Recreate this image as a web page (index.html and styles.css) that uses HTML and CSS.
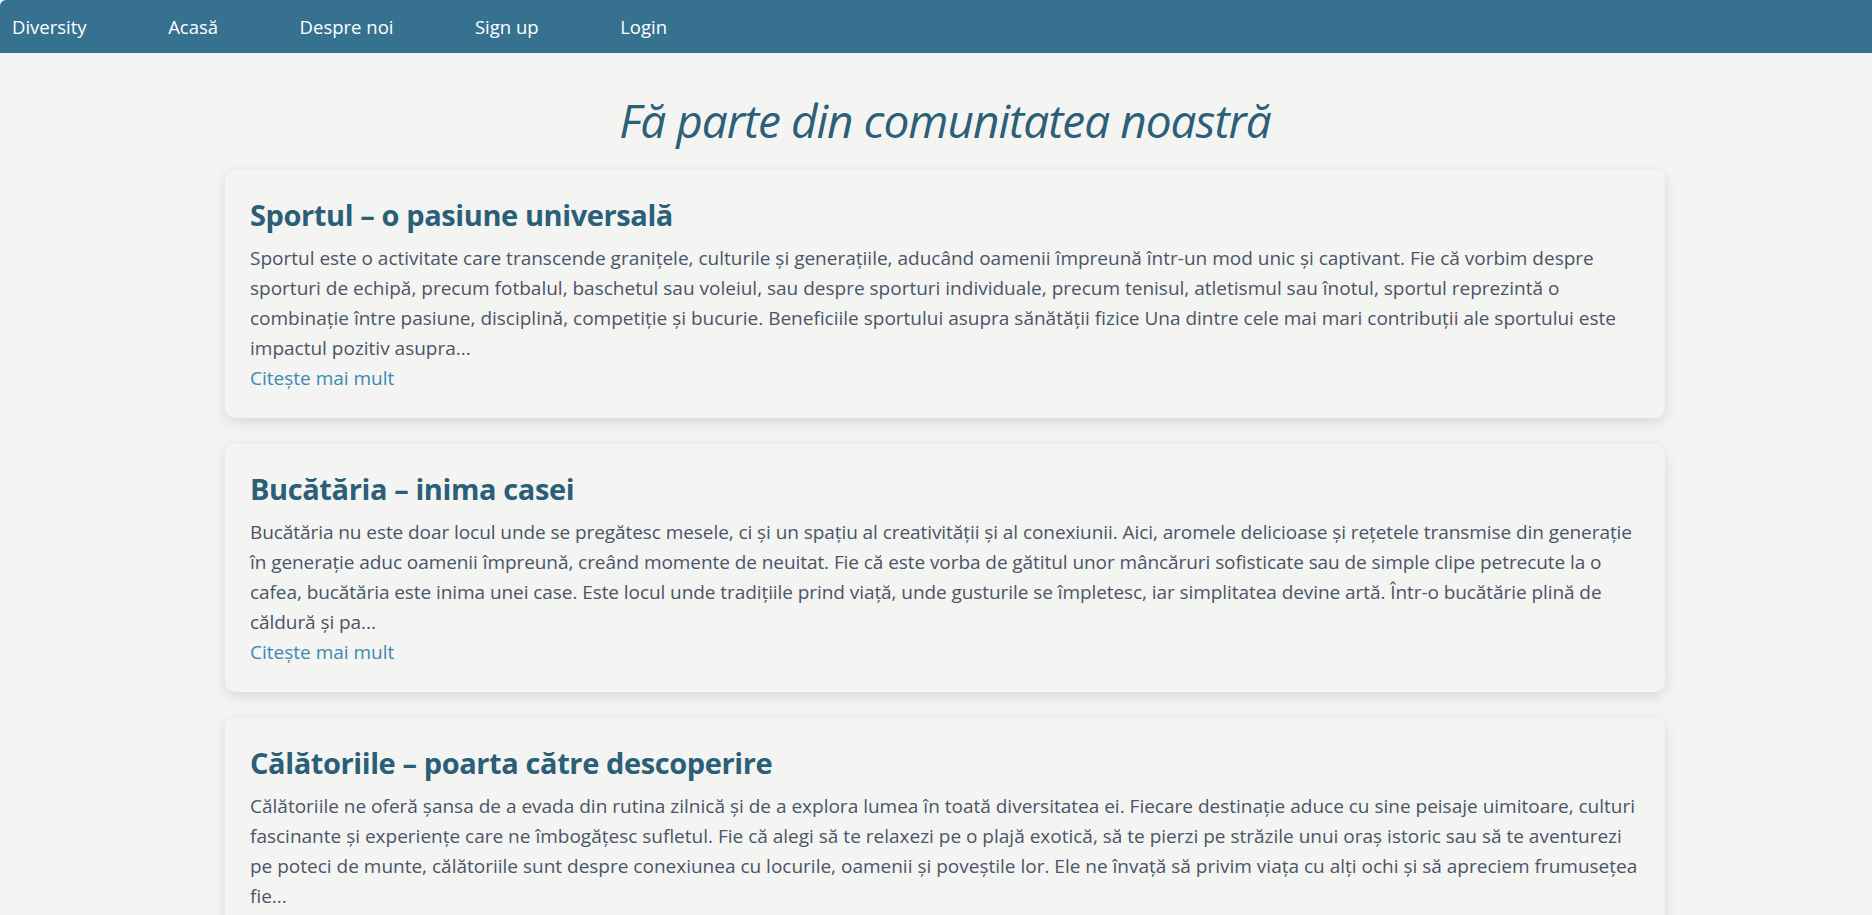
FILE: index.html
```html
<!DOCTYPE html>
<html lang="ro">
<head>
<meta charset="utf-8">
<title>Diversity</title>
<link rel="stylesheet" href="styles.css">
</head>
<body>
<nav class="navbar">
  <a class="nav-link" href="#">Diversity</a>
  <a class="nav-link" href="#">Acasă</a>
  <a class="nav-link" href="#">Despre noi</a>
  <a class="nav-link" href="#">Sign up</a>
  <a class="nav-link" href="#">Login</a>
</nav>
<main class="main">
  <h1 class="page-title">Fă parte din comunitatea noastră</h1>
  <section class="posts">
    <article class="card">
      <h2 class="card-title">Sportul – o pasiune universală</h2>
      <p class="card-text">Sportul este o activitate care transcende granițele, culturile și generațiile, aducând oamenii împreună într-un mod unic și captivant. Fie că vorbim despre sporturi de echipă, precum fotbalul, baschetul sau voleiul, sau despre sporturi individuale, precum tenisul, atletismul sau înotul, sportul reprezintă o combinație între pasiune, disciplină, competiție și bucurie. Beneficiile sportului asupra sănătății fizice Una dintre cele mai mari contribuții ale sportului este impactul pozitiv asupra...</p>
      <a class="card-link" href="#">Citește mai mult</a>
    </article>
    <article class="card">
      <h2 class="card-title">Bucătăria – inima casei</h2>
      <p class="card-text card-text-tight">Bucătăria nu este doar locul unde se pregătesc mesele, ci și un spațiu al creativității și al conexiunii. Aici, aromele delicioase și rețetele transmise din generație în generație aduc oamenii împreună, creând momente de neuitat. Fie că este vorba de gătitul unor mâncăruri sofisticate sau de simple clipe petrecute la o cafea, bucătăria este inima unei case. Este locul unde tradițiile prind viață, unde gusturile se împletesc, iar simplitatea devine artă. Într-o bucătărie plină de căldură și pa...</p>
      <a class="card-link" href="#">Citește mai mult</a>
    </article>
    <article class="card">
      <h2 class="card-title">Călătoriile – poarta către descoperire</h2>
      <p class="card-text">Călătoriile ne oferă șansa de a evada din rutina zilnică și de a explora lumea în toată diversitatea ei. Fiecare destinație aduce cu sine peisaje uimitoare, culturi fascinante și experiențe care ne îmbogățesc sufletul. Fie că alegi să te relaxezi pe o plajă exotică, să te pierzi pe străzile unui oraș istoric sau să te aventurezi pe poteci de munte, călătoriile sunt despre conexiunea cu locurile, oamenii și poveștile lor. Ele ne învață să privim viața cu alți ochi și să apreciem frumusețea fie...</p>
      <a class="card-link" href="#">Citește mai mult</a>
    </article>
  </section>
</main>
</body>
</html>
```

FILE: styles.css
```css
* {
  box-sizing: border-box;
}

html, body {
  margin: 0;
  padding: 0;
}

body {
  background: #f4f4f2;
  font-family: "Open Sans", "Noto Sans", sans-serif;
  color: #4a5568;
}

.navbar {
  display: flex;
  align-items: center;
  gap: 81.5px;
  height: 53px;
  padding-left: 12px;
  background: #36728f;
  border-top-left-radius: 6px;
}

.nav-link {
  color: #ffffff;
  text-decoration: none;
  font-size: 18.5px;
}

.main {
  padding-left: 18px;
  padding-bottom: 40px;
}

.page-title {
  margin: 40px 0 0;
  text-align: center;
  font-size: 46px;
  font-style: italic;
  font-weight: 370;
  line-height: 1.2;
  color: #2c5f78;
  letter-spacing: -1px;
}

.posts {
  display: flex;
  flex-direction: column;
  align-items: center;
  gap: 26px;
  margin-top: 22px;
}

.card {
  width: 1440px;
  padding: 25px;
  background: #f4f4f2;
  border-radius: 10px;
  box-shadow: 0 4px 14px rgba(0, 0, 0, 0.12);
}

.card-title {
  margin: 3px 0 10px;
  font-size: 29px;
  font-weight: 700;
  line-height: 1.2;
  color: #2a5f77;
  letter-spacing: -0.4px;
}

.card-text {
  margin: 0;
  font-size: 19px;
  line-height: 30px;
}

.card-text-tight {
  letter-spacing: -0.07px;
}

.card-link {
  display: block;
  font-size: 19px;
  line-height: 30px;
  color: #3c8ab2;
  text-decoration: none;
}
```
